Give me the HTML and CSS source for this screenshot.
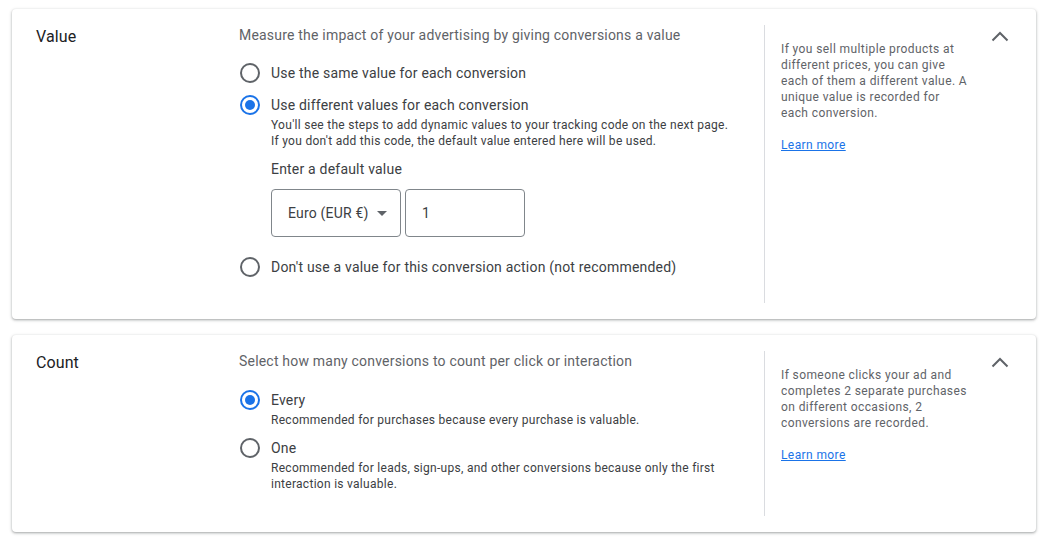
FILE: index.html
```html
<!DOCTYPE html>
<html lang="en">
<head>
    <meta charset="UTF-8">
    <meta name="viewport" content="width=device-width, initial-scale=1.0">
    <title>Conversion settings</title>
    <link rel="stylesheet" href="styles.css">
</head>
<body>
    <div class="card">
        <div class="title">Value</div>
        <div class="main roomy">
            <div class="desc">Measure the impact of your advertising by giving conversions a value</div>
            <div class="options">
                <div class="option">
                    <div class="radio-row"><span class="radio"></span>Use the same value for each conversion</div>
                </div>
                <div class="option">
                    <div class="radio-row"><span class="radio checked"></span>Use different values for each conversion</div>
                    <div class="helper">You'll see the steps to add dynamic values to your tracking code on the next page. If you don't add this code, the default value entered here will be used.</div>
                    <div class="default-value">
                        <div class="label">Enter a default value</div>
                        <div class="fields">
                            <div class="select">Euro (EUR €)<span class="caret"></span></div>
                            <div class="input">1</div>
                        </div>
                    </div>
                </div>
                <div class="option">
                    <div class="radio-row"><span class="radio"></span>Don't use a value for this conversion action (not recommended)</div>
                </div>
            </div>
        </div>
        <div class="side">
            <div class="side-text">
                <p>If you sell multiple products at different prices, you can give each of them a different value. A unique value is recorded for each conversion.</p>
                <a href="#">Learn more</a>
            </div>
            <svg class="chevron" viewBox="0 0 24 24" width="24" height="24"><polyline points="4.5,15.5 12,8 19.5,15.5"/></svg>
        </div>
    </div>

    <div class="card">
        <div class="title">Count</div>
        <div class="main">
            <div class="desc">Select how many conversions to count per click or interaction</div>
            <div class="options tight">
                <div class="option">
                    <div class="radio-row"><span class="radio checked"></span>Every</div>
                    <div class="helper">Recommended for purchases because every purchase is valuable.</div>
                </div>
                <div class="option">
                    <div class="radio-row"><span class="radio"></span>One</div>
                    <div class="helper">Recommended for leads, sign-ups, and other conversions because only the first interaction is valuable.</div>
                </div>
            </div>
        </div>
        <div class="side">
            <div class="side-text">
                <p>If someone clicks your ad and completes 2 separate purchases on different occasions, 2 conversions are recorded.</p>
                <a href="#">Learn more</a>
            </div>
            <svg class="chevron" viewBox="0 0 24 24" width="24" height="24"><polyline points="4.5,15.5 12,8 19.5,15.5"/></svg>
        </div>
    </div>
</body>
</html>
```

FILE: styles.css
```css
body{
    margin: 0;
    padding: 9px 12px;
    background-color: #fff;
    font-family: Roboto, "Liberation Sans", Arial, sans-serif;
    color: #3c4043;
}
.card{
    display: grid;
    grid-template-columns: 227px 1fr 272px;
    background-color: #fff;
    border-radius: 4px;
    box-shadow: 0 1px 2px rgba(60,64,67,.3), 0 1px 3px 1px rgba(60,64,67,.15);
    padding: 16px 0;
    margin-bottom: 16px;
}
.title{
    padding-left: 24px;
    font-size: 16px;
    line-height: 24px;
    color: #202124;
    letter-spacing: .1px;
}
.main{
    padding-bottom: 24px;
}
.main.roomy{
    padding-bottom: 26px;
}
.desc{
    font-size: 14px;
    line-height: 20px;
    color: #5f6368;
    letter-spacing: .2px;
}
.options{
    display: flex;
    flex-direction: column;
    gap: 12px;
    margin-top: 18px;
}
.options.tight{
    gap: 10px;
    margin-top: 19px;
}
.radio-row{
    display: flex;
    align-items: center;
    font-size: 14px;
    line-height: 20px;
    letter-spacing: .2px;
}
.radio{
    box-sizing: border-box;
    width: 20px;
    height: 20px;
    border: 2px solid #5f6368;
    border-radius: 50%;
    margin-left: 1px;
    margin-right: 11px;
    display: flex;
    align-items: center;
    justify-content: center;
}
.radio.checked{
    border-color: #1a73e8;
}
.radio.checked::after{
    content: "";
    width: 10px;
    height: 10px;
    border-radius: 50%;
    background-color: #1a73e8;
}
.helper{
    margin: 2px 0 0 32px;
    max-width: 464px;
    font-size: 12px;
    line-height: 16px;
    letter-spacing: .28px;
}
.default-value{
    margin: 10px 0 0 32px;
    padding-bottom: 8px;
}
.label{
    font-size: 14px;
    line-height: 20px;
    letter-spacing: .2px;
}
.fields{
    display: flex;
    gap: 4px;
    margin-top: 10px;
}
.select, .input{
    box-sizing: border-box;
    height: 48px;
    border: 1px solid #80868b;
    border-radius: 4px;
    display: flex;
    align-items: center;
    padding-left: 16px;
    font-size: 14px;
    letter-spacing: .2px;
    color: #3c4043;
}
.select{
    width: 130px;
}
.caret{
    margin: 1px 0 0 8px;
    width: 0;
    height: 0;
    border-left: 5px solid transparent;
    border-right: 5px solid transparent;
    border-top: 5px solid #5f6368;
}
.input{
    width: 120px;
}
.side{
    display: flex;
    align-items: flex-start;
    border-left: 1px solid #dadce0;
}
.side-text{
    width: 188px;
    padding: 16px 0 0 16px;
    margin-right: auto;
    font-size: 12px;
    line-height: 16px;
    color: #5f6368;
    letter-spacing: .4px;
}
.side-text p{
    margin: 0 0 16px;
}
.side-text a{
    color: #1a73e8;
}
.chevron{
    fill: none;
    stroke: #5f6368;
    stroke-width: 2;
    margin-right: 24px;
}
```
